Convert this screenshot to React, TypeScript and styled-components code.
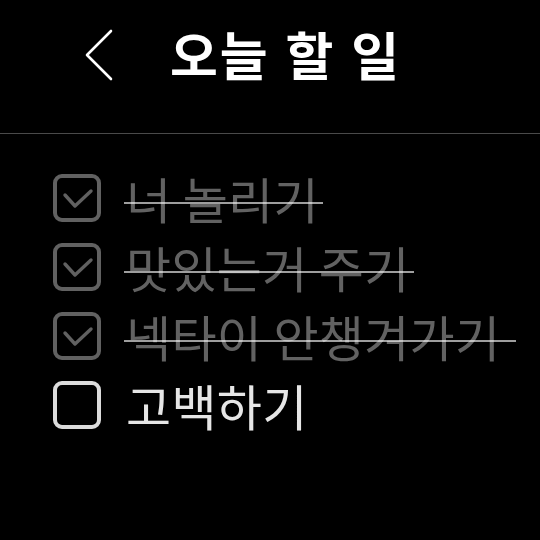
import React, { useState } from "react";
import styled, { createGlobalStyle } from "styled-components";

interface Todo {
  id: number;
  text: string;
  done: boolean;
}

const initialTodos: Todo[] = [
  { id: 1, text: "너 놀리기", done: true },
  { id: 2, text: "맛있는거 주기", done: true },
  { id: 3, text: "넥타이 안챙겨가기 ", done: true },
  { id: 4, text: "고백하기", done: false },
];

const App: React.FC = () => {
  const [todos, setTodos] = useState<Todo[]>(initialTodos);

  const toggle = (id: number) => {
    setTodos(todos.map((t) => (t.id === id ? { ...t, done: !t.done } : t)));
  };

  return (
    <>
      <GlobalStyle />
      <Screen>
        <Header>
          <BackButton aria-label="뒤로">
            <svg width="30" height="52" viewBox="0 0 30 52" fill="none">
              <polyline
                points="27,2 3,26 27,50"
                stroke="#ffffff"
                strokeWidth="2.6"
                strokeLinecap="round"
                strokeLinejoin="round"
              />
            </svg>
          </BackButton>
          <Title>오늘 할 일</Title>
        </Header>

        <List>
          {todos.map((todo) => (
            <Row key={todo.id} onClick={() => toggle(todo.id)}>
              <CheckBox $done={todo.done}>
                {todo.done && (
                  <svg width="40" height="40" viewBox="0 0 40 40" fill="none">
                    <polyline
                      points="8,17 18,28 34,13"
                      stroke="#616161"
                      strokeWidth="3.4"
                      strokeLinecap="round"
                      strokeLinejoin="round"
                    />
                  </svg>
                )}
              </CheckBox>
              <Label $done={todo.done}>{todo.text}</Label>
            </Row>
          ))}
        </List>
      </Screen>
    </>
  );
};

export default App;

const GlobalStyle = createGlobalStyle`
  html, body {
    margin: 0;
    padding: 0;
    background: #000000;
  }
  body {
    font-family: "Noto Sans CJK KR", "Noto Sans", sans-serif;
  }
`;

const Screen = styled.div`
  width: 540px;
  height: 540px;
  background: #000000;
  overflow: hidden;
`;

const Header = styled.div`
  height: 134px;
  display: flex;
  align-items: center;
  padding: 0 0 0 84px;
  box-sizing: border-box;
  border-bottom: 1px solid #4a4a4a;
  gap: 56px;
`;

const BackButton = styled.button`
  background: none;
  border: none;
  padding: 0;
  display: flex;
  margin-top: -24px;
  cursor: pointer;
`;

const Title = styled.h1`
  margin: 0;
  margin-top: -26px;
  font-size: 52px;
  font-weight: 700;
  color: #ffffff;
  letter-spacing: 2px;
  word-spacing: 2px;
`;

const List = styled.div`
  display: flex;
  flex-direction: column;
  padding: 29px 0 0 53px;
`;

const Row = styled.div`
  height: 69px;
  display: flex;
  align-items: center;
  gap: 25px;
  cursor: pointer;
`;

const CheckBox = styled.div<{ $done: boolean }>`
  width: 48px;
  height: 48px;
  box-sizing: border-box;
  border: 4px solid ${(p) => (p.$done ? "#616161" : "#dcdcdc")};
  border-radius: 9px;
  display: flex;
  align-items: center;
  justify-content: center;
  flex-shrink: 0;
`;

const Label = styled.span<{ $done: boolean }>`
  position: relative;
  font-size: 49px;
  line-height: 1;
  font-weight: 400;
  letter-spacing: 0.3px;
  white-space: pre;
  color: ${(p) => (p.$done ? "#626262" : "#e6e6e6")};
  padding-right: ${(p) => (p.$done ? "4px" : "0")};

  &::after {
    content: "";
    display: ${(p) => (p.$done ? "block" : "none")};
    position: absolute;
    left: -2px;
    right: 0;
    top: 59%;
    height: 2px;
    background: rgba(255, 255, 255, 0.62);
  }
`;
